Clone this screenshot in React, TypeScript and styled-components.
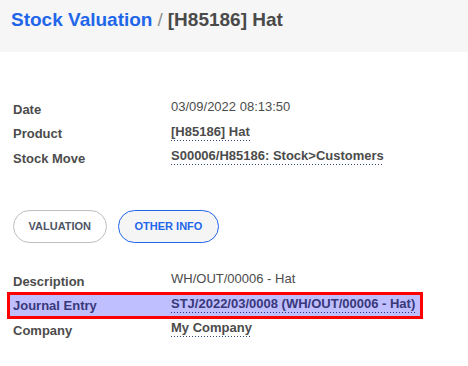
import React from 'react';
import styled, { createGlobalStyle } from 'styled-components';

const GlobalStyle = createGlobalStyle`
  body {
    margin: 0;
    background: #ffffff;
    font-family: "Liberation Sans", Arial, sans-serif;
    color: #4c4c4c;
  }
`;

const Page = styled.div`
  width: 468px;
  min-height: 366px;
  background: #ffffff;
`;

const ControlPanel = styled.div`
  height: 52px;
  background: #f6f6f6;
  padding: 9px 0 0 11px;
  box-sizing: border-box;
`;

const Breadcrumb = styled.div`
  font-size: 19px;
  line-height: 22px;
  font-weight: bold;
  white-space: nowrap;
`;

const Crumb = styled.span`
  color: #1f66ea;
`;

const Separator = styled.span`
  color: #8f8f8f;
  font-weight: normal;
  margin: 0 5px;
`;

const Current = styled.span`
  color: #4a4a4a;
`;

const Sheet = styled.div`
  padding: 45px 0 0 13px;
`;

const Group = styled.div`
  display: flex;
  flex-direction: column;
`;

const Row = styled.div<{ $highlight?: boolean }>`
  display: grid;
  grid-template-columns: 158px 1fr;
  height: 24.5px;
  position: relative;

  ${p =>
    p.$highlight &&
    `
    &::after {
      content: '';
      position: absolute;
      left: -6px;
      top: -2px;
      width: 416px;
      height: 27px;
      box-sizing: border-box;
      border: 3px solid #ff0000;
      background: rgba(0, 0, 255, 0.25);
      pointer-events: none;
    }
  `}
`;

const Label = styled.div`
  font-size: 13px;
  line-height: 19.5px;
  padding-top: 2.5px;
  font-weight: bold;
  color: #4c4c4c;
  white-space: nowrap;
`;

const Value = styled.div`
  font-size: 13px;
  line-height: 19.5px;
  color: #4c4c4c;
  white-space: nowrap;
`;

const Link = styled.span`
  display: inline-block;
  font-weight: bold;
  line-height: 17px;
  color: #4c4c4c;
  padding-bottom: 1px;
  background-image: linear-gradient(to right, #34437f 1px, transparent 1px);
  background-size: 3px 1px;
  background-repeat: repeat-x;
  background-position: 0 100%;
`;

const Tabs = styled.div`
  display: flex;
  gap: 11px;
  margin: 39px 0 26.5px;
`;

const TabButton = styled.button<{ $active?: boolean }>`
  height: 33px;
  padding: 0 ${p => (p.$active ? '16px' : '14.5px')};
  border-radius: 17px;
  border: 1px solid ${p => (p.$active ? '#1f66ea' : '#bdbdbd')};
  background: ${p => (p.$active ? '#f5f5f5' : '#ffffff')};
  color: ${p => (p.$active ? '#1f66ea' : '#4d5566')};
  font-family: "Liberation Sans", Arial, sans-serif;
  font-size: 11px;
  font-weight: bold;
  text-transform: uppercase;
  cursor: pointer;
`;

const App: React.FC = () => {
  return (
    <Page>
      <GlobalStyle />
      <ControlPanel>
        <Breadcrumb>
          <Crumb>Stock Valuation</Crumb>
          <Separator>/</Separator>
          <Current>[H85186] Hat</Current>
        </Breadcrumb>
      </ControlPanel>
      <Sheet>
        <Group>
          <Row>
            <Label>Date</Label>
            <Value>03/09/2022 08:13:50</Value>
          </Row>
          <Row>
            <Label>Product</Label>
            <Value><Link>[H85186] Hat</Link></Value>
          </Row>
          <Row>
            <Label>Stock Move</Label>
            <Value><Link>S00006/H85186: Stock&gt;Customers</Link></Value>
          </Row>
        </Group>
        <Tabs>
          <TabButton>Valuation</TabButton>
          <TabButton $active>Other Info</TabButton>
        </Tabs>
        <Group>
          <Row>
            <Label>Description</Label>
            <Value>WH/OUT/00006 - Hat</Value>
          </Row>
          <Row $highlight>
            <Label>Journal Entry</Label>
            <Value><Link>STJ/2022/03/0008 (WH/OUT/00006 - Hat)</Link></Value>
          </Row>
          <Row>
            <Label>Company</Label>
            <Value><Link>My Company</Link></Value>
          </Row>
        </Group>
      </Sheet>
    </Page>
  );
};

export default App;
